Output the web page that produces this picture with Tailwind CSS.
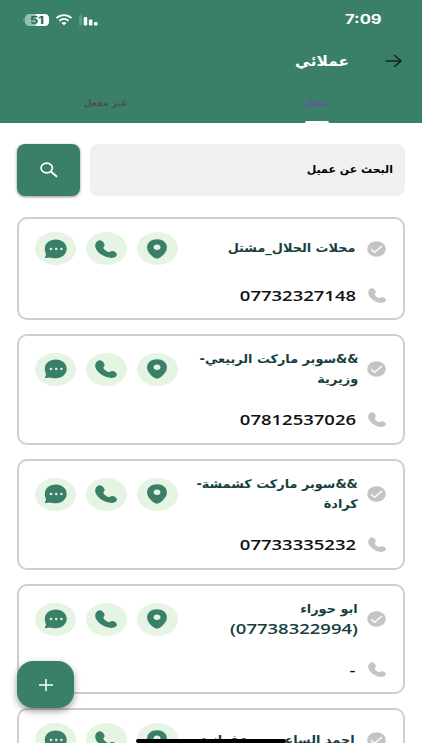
<!DOCTYPE html>
<html lang="ar" dir="rtl">
<head>
    <meta charset="UTF-8">
    <meta name="viewport" content="width=device-width, initial-scale=1.0">
    <title>عملائي</title>
    <script src="https://cdn.jsdelivr.net/npm/@tailwindcss/browser@4"></script>
</head>
<body class="relative h-[750px] overflow-hidden bg-white font-['DejaVu_Sans',sans-serif]">

    <!-- Icons -->
    <svg class="hidden">
        <symbol id="i-chat" viewBox="0 0 23 20" preserveAspectRatio="none">
            <path fill="currentColor" d="M11.8.5C5.6.5.8 4.4.8 9.7c0 2.1.5 3.8 1.1 5.2.2.7-.1 1.5-.8 2.8-.5 1 .1 1.6 1.1 1.4 1.2-.2 2.6-.7 3.7-.7.9.1 3 .9 5.900.9 6.300 0 10.900-4.200 10.900-9.500S18 .5 11.800.5z"/>
            <g fill="#e6f4e3"><ellipse cx="7" cy="10" rx="1.3" ry="1.15"/><ellipse cx="12.2" cy="10" rx="1.3" ry="1.15"/><ellipse cx="17.4" cy="10" rx="1.3" ry="1.15"/></g>
        </symbol>
        <symbol id="i-phone" viewBox="0 0 22 18" preserveAspectRatio="none">
            <path fill="currentColor" d="M.2 5.2C.4 2.7 2.5.2 4.9.2c2.200 0 4.700 3 4.700 4.700 0 1.600-1.600 2-1.200 3.200.5 1.400 3 3.400 4.600 3.900 1.700.4 2.300-1 4.200-1 2 0 4.700 1.800 4.700 3.500 0 2-2.500 3.400-5.400 3.400C8.800 17.900-.4 11 .2 5.200z"/>
        </symbol>
        <symbol id="i-pin" viewBox="0 0 20 20" preserveAspectRatio="none">
            <path fill="currentColor" fill-rule="evenodd" d="M10 .2C4.200.2.1 3.600.1 8.300c0 4 2.900 7.500 6.700 10.300 2.200 1.500 4.200 1.500 6.400 0 3.800-2.800 6.700-6.300 6.700-10.300C19.900 3.600 15.800.2 10 .2zM10 5.400c2 0 3.500 1.200 3.500 2.800S12 11 10 11 6.500 9.800 6.500 8.200 8 5.400 10 5.400z"/>
        </symbol>
        <symbol id="i-check" viewBox="0 0 19 16" preserveAspectRatio="none">
            <ellipse cx="9.5" cy="8" rx="9.3" ry="7.8" fill="currentColor"/>
            <path d="M4 8.300l3.500 3L15 5" fill="none" stroke="#fff" stroke-width="1.3"/>
        </symbol>
    </svg>

    <!-- Header -->
    <header class="flex h-[123px] flex-col bg-[#3a8068] text-white">
        <div class="flex h-[38px] items-center justify-between pt-0.5 pr-10 pl-[23px]">
            <span class="inline-block origin-right scale-x-[1.28] font-['Inter',sans-serif] text-[13px] font-bold" dir="ltr">7:09</span>
            <svg class="h-[14px] w-[76px]" viewBox="0 0 76 14">
                <path d="M1.500 5C0 5.500 0 8.500 1.500 9z" fill="#8fb8a8"/>
                <path d="M6 1h7v12H6c-2.500 0-4-1.700-4-4V5c0-2.300 1.500-4 4-4z" fill="#94c2b2"/>
                <path d="M13 1h9c2.500 0 4 1.700 4 4v4c0 2.300-1.500 4-4 4h-9z" fill="#fff"/>
                <text x="7" y="10.8" textLength="14" lengthAdjust="spacingAndGlyphs" direction="ltr" text-anchor="start" font-family="Inter, sans-serif" font-size="10" font-weight="800" fill="#2f6f59">51</text>
                <g fill="none" stroke="#fff" stroke-width="1.8">
                    <path d="M33.500 5.200c4.300-4 10.700-4 15 0"/>
                    <path d="M36.300 7.900c2.900-2.500 6.500-2.500 9.400 0"/>
                </g>
                <path d="M38.300 9.900c1.700-1.300 3.700-1.300 5.400 0L41 12.300z" fill="#fff"/>
                <rect x="56" y="2" width="3" height="10.5" rx="1" fill="#5c9985"/>
                <g fill="#fff">
                    <rect x="60.7" y="4" width="3.5" height="8.5" rx="1"/>
                    <rect x="65.9" y="6.500" width="3.5" height="6" rx="1"/>
                    <rect x="71" y="9" width="3.5" height="3.5" rx="1"/>
                </g>
            </svg>
        </div>
        <div class="flex h-[46px] items-center gap-9 pr-5">
            <svg class="h-3.5 w-[17px]" viewBox="0 0 17 14" fill="none" stroke="#15251f" stroke-width="1.5">
                <path d="M.5 7h15M9 1l7 6-7 6"/>
            </svg>
            <h1 class="inline-block origin-right scale-x-[1.1] text-[14px] font-bold">عملائي</h1>
        </div>
        <div class="grid flex-1 grid-cols-2 text-center text-[9px] leading-[39px] font-bold">
            <div class="relative text-[#6d50a0]">
                مفعل
                <span class="absolute bottom-0 left-1/2 h-0.5 w-6 -translate-x-1/2 rounded-t-full bg-white"></span>
            </div>
            <div class="text-[#4b4f52]">غير مفعل</div>
        </div>
    </header>

    <!-- Search -->
    <div class="mx-[17px] mt-[21px] flex h-[52px] gap-2.5">
        <div class="flex flex-1 items-center rounded-lg bg-[#f0f0f0] pr-3 text-black">
            <span class="text-[11px] font-bold">البحث عن عميل</span>
        </div>
        <button class="flex w-[63px] items-center justify-center rounded-lg bg-[#3a8068] shadow-[0_1px_3px_rgba(0,0,0,0.45)]">
            <svg class="h-4 w-[18px]" viewBox="0 0 18 16" fill="none" stroke="#fff" stroke-width="1.6">
                <ellipse cx="6.7" cy="6" rx="5.7" ry="4.9"/>
                <path d="M10.800 9.600l6.200 5.200" stroke-width="1.9"/>
            </svg>
        </button>
    </div>

    <!-- Clients -->
    <main id="list" class="mt-[21px] flex h-[526px] flex-col gap-3.5 overflow-hidden px-[17px]"></main>

    <button class="absolute top-[661px] left-[17px] flex h-[47px] w-[57px] items-center justify-center rounded-2xl bg-[#3a8068] shadow-[0_3px_7px_rgba(0,0,0,0.4)]">
        <svg class="h-3 w-3.5" viewBox="0 0 14 12" stroke="#fff" stroke-width="1.5"><path d="M0 6h14M7 0v12"/></svg>
    </button>
    <div class="absolute top-[739px] left-[136px] h-1 w-[150px] rounded-full bg-black"></div>

    <script>
        const clients = [
            { name: ["محلات الحلال_مشتل"], phone: "07732327148" },
            { name: ["&&سوبر ماركت الربيعي-", "وزيرية"], phone: "07812537026" },
            { name: ["&&سوبر ماركت كشمشة-", "كرادة"], phone: "07733335232" },
            { name: ["ابو حوراء", "(07738322994)"], phone: "-" },
            { name: ["احمد الساعدي- زعفرانية"], phone: "" },
        ];

        const action = (icon, size) => `
            <span class="flex h-[33px] w-[41px] items-center justify-center rounded-[50%] bg-[#e6f4e3] pr-px text-[#3a8068]">
                <svg class="${size}"><use href="#${icon}"/></svg>
            </span>`;

        const line = (text) => /\d/.test(text)
            ? `<span dir="ltr" class="block w-max origin-right scale-x-[1.32] font-['Open_Sans',sans-serif] text-[14px] leading-[20.400px] font-semibold">${text}</span>`
            : `<span class="block w-max origin-right scale-x-[1.07] text-[12px] leading-[20.400px] font-bold">${text}</span>`;

        document.getElementById("list").innerHTML = clients.map((c) => `
            <article class="shrink-0 rounded-[10px] border-2 border-[#cfcfcf] pt-[13px] pr-[17px] pb-[11px] pl-4">
                <div class="flex items-center">
                    <svg class="h-4 w-[19px] shrink-0 text-[#c4c4c4]"><use href="#i-check"/></svg>
                    <div class="flex-1 ${c.name.length > 1 ? "pr-[9px]" : "pr-3"} text-[#173f3f]">${c.name.map(line).join("")}</div>
                    <div class="flex gap-2.5">
                        ${action("i-pin", "h-5 w-5")}
                        ${action("i-phone", "h-[18px] w-[22px]")}
                        ${action("i-chat", "h-5 w-[23px]")}
                    </div>
                </div>
                <div class="mt-[19px] flex h-[22px] items-center gap-3 mb-px">
                    <svg class="h-[15px] w-[18px] text-[#c4c4c4]"><use href="#i-phone"/></svg>
                    <span dir="ltr" class="block origin-right scale-x-[1.32] font-['Open_Sans',sans-serif] text-[14px] font-semibold text-[#111]">${c.phone}</span>
                </div>
            </article>`).join("");
    </script>
</body>
</html>
